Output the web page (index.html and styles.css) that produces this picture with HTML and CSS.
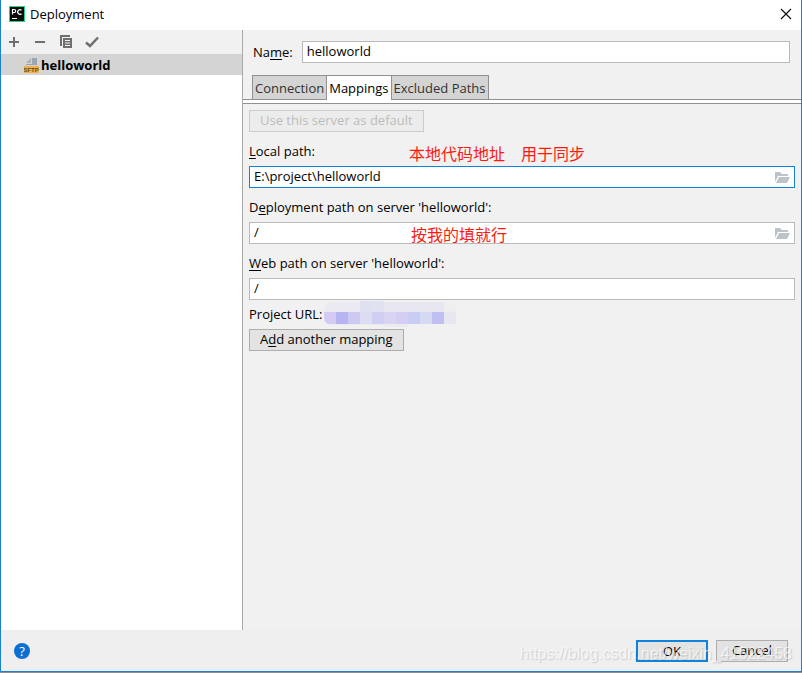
FILE: index.html
```
<!DOCTYPE html>
<html lang="en">
<head>
    <meta charset="UTF-8">
    <meta name="viewport" content="width=device-width, initial-scale=1.0">
    <title>Deployment</title>
    <link rel="stylesheet" href="styles.css">
</head>
<body>
    <div class="window">
        <header class="titlebar">
            <svg class="app-icon" width="16" height="16" viewBox="0 0 16 16">
                <rect width="16" height="16" fill="#21d789"/>
                <rect x="1" y="1" width="14" height="14" fill="#0b0b0b"/>
                <path d="M3.500 8.500V3.500H5.200A1.500 1.500 0 0 1 5.200 6.500H3.500M12.500 4.200A2.300 2.300 0 1 0 12.500 7.700M3 12.500H8" fill="none" stroke="#fff" stroke-width="1.200"/>
            </svg>
            <h1 class="title">Deployment</h1>
            <button class="close-button" aria-label="Close">
                <svg width="12" height="12" viewBox="0 0 12 12"><path d="M1 1L11 11M11 1L1 11" stroke="#111" stroke-width="1.200"/></svg>
            </button>
        </header>

        <div class="main">
            <!-- Server list -->
            <aside class="sidebar">
                <div class="toolbar">
                    <button class="tool-button" aria-label="Add">
                        <svg width="16" height="16" viewBox="0 0 16 16"><path d="M8 3V13M3 8H13" stroke="#6e6e6e" stroke-width="2"/></svg>
                    </button>
                    <button class="tool-button" aria-label="Remove">
                        <svg width="16" height="16" viewBox="0 0 16 16"><path d="M3 8H13" stroke="#6e6e6e" stroke-width="2"/></svg>
                    </button>
                    <button class="tool-button" aria-label="Copy">
                        <svg width="16" height="16" viewBox="0 0 16 16">
                            <path d="M2 1H12V3H4V12H2Z" fill="#6e6e6e"/>
                            <path d="M5 4H14V14H5Z" fill="#6e6e6e"/>
                            <path d="M7 6.500H12M7 9H12M7 11.500H12" stroke="#f2f2f2"/>
                        </svg>
                    </button>
                    <button class="tool-button" aria-label="Use as default">
                        <svg width="16" height="16" viewBox="0 0 16 16"><path d="M2 8.500L6 12L14 3.500" fill="none" stroke="#6e6e6e" stroke-width="2.500"/></svg>
                    </button>
                </div>
                <div class="server">
                    <svg width="16" height="16" viewBox="0 0 16 16">
                        <path d="M7 1V6H2Z" fill="#9aa7b0" opacity="0.700"/>
                        <path d="M8 1H13V8H2V7H8Z" fill="#9aa7b0"/>
                        <rect y="9" width="15" height="7" fill="#edb04e"/>
                        <text class="sftp" x="7" y="15" text-anchor="middle">SFTP</text>
                    </svg>
                    <span>helloworld</span>
                </div>
            </aside>

            <main class="details">
                <div class="name-row">
                    <label for="name">Na<u>m</u>e:</label>
                    <input class="text-box" type="text" id="name" value="helloworld">
                </div>
                <div class="tabs">
                    <button class="tab">Connection</button>
                    <button class="tab active">Mappings</button>
                    <button class="tab">Excluded Paths</button>
                </div>

                <form class="mappings">
                    <button type="button" class="button" disabled>Use this server as default</button>

                    <div class="field">
                        <label for="local"><u>L</u>ocal path:</label>
                        <div class="path-box">
                            <input class="text-box focused" type="text" id="local" value="E:\project\helloworld">
                            <button type="button" class="browse" aria-label="Browse">
                                <svg width="16" height="12" viewBox="0 0 16 12"><path d="M0 0H5L7 2H13V4H3L0 10Z" fill="#bdc3c8"/><path d="M4 5H15L12 11H1Z" fill="#bdc3c8"/></svg>
                            </button>
                        </div>
                        <span class="note note-local">本地代码地址　用于同步</span>
                    </div>

                    <div class="field">
                        <label for="deploy">D<u>e</u>ployment path on server 'helloworld':</label>
                        <div class="path-box">
                            <input class="text-box" type="text" id="deploy" value="/">
                            <button type="button" class="browse" aria-label="Browse">
                                <svg width="16" height="12" viewBox="0 0 16 12"><path d="M0 0H5L7 2H13V4H3L0 10Z" fill="#bdc3c8"/><path d="M4 5H15L12 11H1Z" fill="#bdc3c8"/></svg>
                            </button>
                        </div>
                        <span class="note note-deploy">按我的填就行</span>
                    </div>

                    <div class="field">
                        <label for="web"><u>W</u>eb path on server 'helloworld':</label>
                        <input class="text-box" type="text" id="web" value="/">
                    </div>

                    <div class="url-row">
                        <span>Project URL:</span>
                        <!-- URL is hidden behind a mosaic -->
                        <svg width="134" height="26" viewBox="0 0 134 26">
                            <clipPath id="smudge"><path d="M10 1H37V0H61V1H122L133 6V23H85V26H60V24H10Q1 24 1 16V10Q1 1 10 1Z"/></clipPath>
                            <g clip-path="url(#smudge)">
                                <rect width="134" height="26" fill="#ebebed"/>
                                <rect x="1" width="36" height="11" fill="#ebeaf2"/>
                                <rect x="37" width="12" height="11" fill="#dfe0f0"/>
                                <rect x="49" width="12" height="11" fill="#e0e1f1"/>
                                <rect x="61" width="60" height="11" fill="#e6e5f0"/>
                                <rect x="121" width="13" height="11" fill="#eeeef1"/>
                                <rect x="1" y="11" width="12" height="12" fill="#d3cbf3"/>
                                <rect x="13" y="11" width="12" height="12" fill="#b6b5f2"/>
                                <rect x="25" y="11" width="12" height="12" fill="#cdc9f3"/>
                                <rect x="37" y="11" width="12" height="12" fill="#dcdcf2"/>
                                <rect x="49" y="11" width="12" height="12" fill="#cfcff4"/>
                                <rect x="61" y="11" width="12" height="12" fill="#d8d4f2"/>
                                <rect x="73" y="11" width="12" height="12" fill="#d3cef2"/>
                                <rect x="85" y="11" width="12" height="12" fill="#c8cdf3"/>
                                <rect x="97" y="11" width="12" height="12" fill="#d5d9f2"/>
                                <rect x="109" y="11" width="12" height="12" fill="#c0bff2"/>
                                <rect x="121" y="11" width="12" height="12" fill="#e7e7f1"/>
                            </g>
                        </svg>
                    </div>

                    <button type="button" class="button">A<u>d</u>d another mapping</button>
                </form>
            </main>
        </div>

        <footer class="footer">
            <button class="help-button" aria-label="Help">?</button>
            <button class="button ok-button">OK</button>
            <button class="button cancel-button">Cancel</button>
            <span class="watermark">https://blog.csdn.net/weixin_41522458</span>
        </footer>
    </div>
</body>
</html>
```
FILE: styles.css
```
* {
    box-sizing: border-box;
}

body {
    margin: 0;
    min-height: 100vh;
    display: flex;
    flex-direction: column;
    border-bottom: 1px solid #8d8d8d;
    background: #f1f1f1;
    color: #000000;
    font-family: "Open Sans", "Noto Sans CJK SC", sans-serif;
    font-size: 13px;
    line-height: 18px;
}

button, input {
    font: inherit;
    color: inherit;
}

button {
    border: none;
    background: none;
    padding: 0;
}

svg {
    display: block;
    flex-shrink: 0;
}

u {
    text-underline-offset: 2px;
}

.window {
    flex: 1;
    display: flex;
    flex-direction: column;
    border: 1px solid #1b82d2;
    border-top: none;
}

.titlebar {
    display: flex;
    align-items: center;
    height: 30px;
    padding: 0 9px 2px 8px;
    gap: 5px;
    background: #ffffff;
}

.title {
    flex: 1;
    margin: 0;
    font-size: 13px;
    font-weight: normal;
}

.main {
    flex: 1;
    display: flex;
}

/* Server list */
.sidebar {
    width: 242px;
    border-right: 1px solid #a9a9a9;
    background: #ffffff;
}

.toolbar {
    display: flex;
    align-items: center;
    gap: 10px;
    height: 24px;
    padding-left: 5px;
    background: #f1f1f1;
}

.server {
    display: flex;
    align-items: center;
    height: 21px;
    padding-left: 23px;
    gap: 1px;
    background: #d4d4d4;
    font-weight: bold;
    line-height: 16px;
}

.sftp {
    font-family: "Liberation Sans", sans-serif;
    font-size: 6px;
    font-weight: bold;
    fill: #6b4a14;
}

/* Server details */
.details {
    flex: 1;
    min-width: 0;
}

.name-row {
    display: flex;
    align-items: center;
    gap: 9px;
    padding: 11px 11px 12px 10px;
}

.text-box {
    width: 100%;
    height: 22px;
    padding: 0 4px 2px;
    border: 1px solid #bababa;
    background: #ffffff;
    outline: none;
}

.focused {
    border-color: #1283da;
}

.tabs {
    display: flex;
    height: 29px;
    padding-left: 9px;
    border-bottom: 1px solid #919191;
    background: linear-gradient(#f1f1f1 24px, #919191 24px, #919191 25px, #ffffff 25px);
}

.tab {
    height: 25px;
    padding: 0 2px;
    border: 1px solid #919191;
    background: #d4d4d4;
    color: #333333;
}

.tab.active {
    border-width: 1px 0 0;
    background: #ffffff;
    color: #000000;
}

.mappings {
    padding: 6px;
}

.button {
    display: block;
    height: 22px;
    padding: 0 10px 2px;
    border: 1px solid #adadad;
    background: #e3e3e3;
    line-height: 18px;
}

.button:disabled {
    border-color: #cccccc;
    background: #ececec;
    color: #bcbcbc;
}

.field {
    position: relative;
    margin-top: 10px;
}

.field label {
    display: block;
    margin-bottom: 6px;
}

.path-box {
    position: relative;
}

.browse {
    position: absolute;
    top: 6px;
    right: 4px;
}

.note {
    position: absolute;
    color: #ff1a10;
    font-family: "Noto Sans CJK SC", sans-serif;
    font-size: 16px;
    line-height: 22px;
}

.note-local {
    top: 0;
    left: 160px;
}

.note-deploy {
    top: 25px;
    left: 162px;
}

.url-row {
    display: flex;
    align-items: center;
    gap: 1px;
    height: 20px;
    margin: 4px 0 5px;
}

/* Bottom bar */
.footer {
    position: relative;
    display: flex;
    align-items: center;
    gap: 8px;
    height: 41px;
    padding: 0 13px;
    background: #efefef;
}

.help-button {
    width: 16px;
    height: 16px;
    margin-right: auto;
    border-radius: 50%;
    background: #0a6fd3;
    color: #ffffff;
    line-height: 16px;
}

.ok-button, .cancel-button {
    width: 72px;
    padding: 0 0 2px;
}

.ok-button {
    border: 2px solid #1283da;
}

.watermark {
    position: absolute;
    right: 9px;
    bottom: 8px;
    color: rgba(255, 255, 255, 0.7);
    font-family: "Liberation Sans", sans-serif;
    font-size: 16px;
    text-shadow: 1px 1px 1px rgba(0, 0, 0, 0.15);
    pointer-events: none;
}
```
